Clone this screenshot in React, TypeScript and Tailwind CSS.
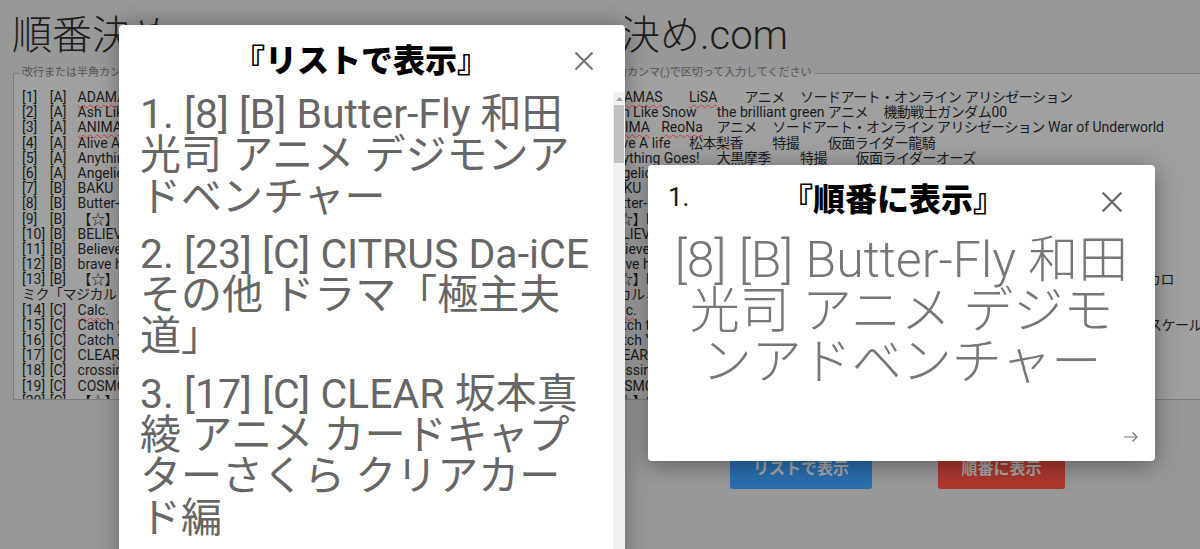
import React from "react";

const RAW: string[] = [
  "[1]\t[A]\t~ADAMAS~\t~LiSA~\tアニメ\tソードアート・オンライン アリシゼーション",
  "[2]\t[A]\tAsh Like Snow\tthe brilliant green\tアニメ\t機動戦士ガンダム00",
  "[3]\t[A]\t~ANIMA~\t~ReoNa~\tアニメ\tソードアート・オンライン アリシゼーション War of Underworld",
  "[4]\t[A]\tAlive A life\t松本梨香\t特撮\t仮面ライダー龍騎",
  "[5]\t[A]\tAnything Goes!\t大黒摩季\t特撮\t仮面ライダーオーズ",
  "[6]\t[A]\tAngelic Angel\tμ's\tアニメ\tラブライブ!",
  "[7]\t[B]\tBAKU\tいきものがかり\tアニメ\tNARUTO-ナルト- 疾風伝",
  "[8]\t[B]\tButter-Fly\t和田光司\tアニメ\tデジモンアドベンチャー",
  "[9]\t[B]\t【☆】Blue Bird\tいきものがかり\tアニメ\tNARUTO-ナルト- 疾風伝",
  "[10]\t[B]\tBELIEVE\t玉置成実\tアニメ\t機動戦士ガンダムSEED",
  "[11]\t[B]\tBelieve\tFolder5\tアニメ\tONE PIECE",
  "[12]\t[B]\tbrave heart\t宮崎歩\tアニメ\tデジモンアドベンチャー",
  "[13]\t[B]\t【☆】Blue Star\tじーざす(ワンダフル☆オポチュニティ!) feat.初音ミク\t\t\t\tボカロ",
  "ミク「マジカルミライ2019」テーマソング",
  "[14]\t[C]\t~Calc.~\tジミーサムP\tボカロ\t初音ミク",
  "[15]\t[C]\tCatch the Moment\tLiSA\tアニメ\t劇場版 ソードアートオンライン -オーディナル・スケール-",
  "[16]\t[C]\tCatch You Catch Me\tグミ\tアニメ\tカードキャプターさくら",
  "[17]\t[C]\tCLEAR\t坂本真綾\tアニメ\tカードキャプターさくら クリアカード編",
  "[18]\t[C]\tcrossing field\tLiSA\tアニメ\tソードアート・オンライン",
  "[19]\t[C]\tCOSMOS\tRed Velvet\tK-POP\tSAPPHIRE",
  "[20]\t[C]\t【☆】Cagayake!GIRLS\t放課後ティータイム\tアニメ\tけいおん!",
];

const CJK = /[\u2600-\u26ff\u3000-\u30ff\u3400-\u9fff\uff00-\uffef]+/g;

function runs(s: string, base: string): React.ReactNode[] {
  const out: React.ReactNode[] = [];
  let last = 0;
  let m: RegExpExecArray | null;
  CJK.lastIndex = 0;
  let k = 0;
  while ((m = CJK.exec(s))) {
    if (m.index > last) out.push(<React.Fragment key={`${base}-t${k++}`}>{s.slice(last, m.index)}</React.Fragment>);
    out.push(
      <span key={`${base}-c${k++}`} className="tracking-[-0.5px]">
        {m[0]}
      </span>
    );
    last = m.index + m[0].length;
  }
  if (last < s.length) out.push(<React.Fragment key={`${base}-t${k++}`}>{s.slice(last)}</React.Fragment>);
  return out;
}

function TextLine({ text }: { text: string }) {
  const parts = text.split("~");
  return (
    <div className="h-[15.2px]">
      {parts.map((p, i) =>
        i % 2 === 1 ? (
          <span
            key={i}
            className="underline decoration-wavy decoration-[#d23b3b] decoration-[1px] underline-offset-[2px]"
          >
            {p}
          </span>
        ) : (
          <React.Fragment key={i}>{runs(p, String(i))}</React.Fragment>
        )
      )}
    </div>
  );
}

function Page() {
  return (
    <div className="h-[549px] w-[1100px] bg-[#989898] pt-[16px] font-[Roboto,'Noto_Sans_CJK_JP',sans-serif]">
      <h1 className="pl-[12px] text-[40px] font-light leading-[40px] text-[#1d1d1d]">
        順番決め.com
      </h1>
      <fieldset className="mx-[13px] mt-[10px] border border-[#7e7e7e] bg-[#a0a0a0] pl-[8px] pt-[10px]">
        <legend className="-ml-[2px] px-[2px] text-[11px] leading-[14px] text-[#555555]">
          改行または半角カンマ(,)で区切って入力してください
        </legend>
        <div className="h-[309px] overflow-hidden whitespace-pre text-[14px] leading-[15.2px] text-[#1b1b1b] [tab-size:8]">
          {RAW.map((t, i) => (
            <TextLine key={i} text={t} />
          ))}
        </div>
      </fieldset>
      <div className="mt-[48px] flex gap-[66px] pl-[202px]">
        <div className="flex h-[41px] w-[142px] items-center justify-center rounded-[3px] bg-[#2b6fae] text-[16px] font-bold text-[#a9a9a9]">
          リストで表示
        </div>
        <div className="flex h-[41px] w-[127px] items-center justify-center rounded-[3px] bg-[#ad382d] text-[16px] font-bold text-[#a9a9a9]">
          順番に表示
        </div>
      </div>
    </div>
  );
}

function CloseIcon({ className }: { className: string }) {
  return (
    <svg className={className} viewBox="0 0 20 20" fill="none">
      <path d="M1.5 1.5L18.5 18.5M18.5 1.5L1.5 18.5" stroke="#6f6f6f" strokeWidth="2" />
    </svg>
  );
}

const ITEMS = [
  "1. [8] [B] Butter-Fly 和田光司 アニメ デジモンアドベンチャー",
  "2. [23] [C] CITRUS Da-iCE その他 ドラマ「極主夫道」",
  "3. [17] [C] CLEAR 坂本真綾 アニメ カードキャプターさくら クリアカード編",
  "4. [5] [A] Anything Goes! 大黒摩季 特撮 仮面ライダーオーズ",
];

export default function App() {
  return (
    <div className="relative flex h-[549px] w-[1200px] overflow-hidden bg-[#989898]">
      <div className="h-[549px] w-[625px] shrink-0 overflow-hidden">
        <Page />
      </div>
      <div className="h-[549px] flex-1 overflow-hidden">
        <div className="-ml-[97px]">
          <Page />
        </div>
      </div>

      {/* List modal */}
      <div className="absolute left-[119px] top-[25px] flex h-[540px] w-[506px] flex-col rounded-t-[4px] bg-white shadow-[0_0_22px_rgba(0,0,0,0.35)] font-[Roboto,'Noto_Sans_CJK_JP',sans-serif]">
        <div className="relative flex h-[67px] shrink-0 items-center pr-[22px] pt-[4px]">
          <h2 className="flex-1 text-center text-[32px] font-black leading-none text-black">
            『リストで表示』
          </h2>
          <CloseIcon className="absolute right-[31px] top-[26px] h-[20px] w-[20px]" />
        </div>
        <div className="flex min-h-0 flex-1">
          <div className="flex-1 overflow-hidden pl-[21px] pr-[15px] pt-[2px] text-[41px] leading-[41.3px] text-[#666666]">
            {ITEMS.map((t, i) => (
              <div key={i} className="mb-[16px]">
                {t}
              </div>
            ))}
          </div>
          <div className="flex w-[12px] flex-col items-center bg-[#f1f1f1]">
            <svg className="mt-[5px] h-[4px] w-[7px]" viewBox="0 0 7 4">
              <path d="M3.5 0L7 4H0Z" fill="#a3a3a3" />
            </svg>
            <div className="mt-[4px] h-[58px] w-[10px] bg-[#c1c1c1]" />
          </div>
        </div>
      </div>

      {/* Sequential modal */}
      <div className="absolute left-[648px] top-[165px] flex h-[296px] w-[507px] flex-col rounded-[4px] bg-white shadow-[0_4px_24px_rgba(0,0,0,0.4)] font-[Roboto,'Noto_Sans_CJK_JP',sans-serif]">
        <div className="relative flex h-[70px] shrink-0 items-center pr-[17px]">
          <span className="absolute left-[20px] top-[17px] text-[26px] leading-[30px] text-[#1a1a1a]">
            1.
          </span>
          <h2 className="flex-1 text-center text-[32px] font-black leading-none text-black">
            『順番に表示』
          </h2>
          <CloseIcon className="absolute right-[32px] top-[26px] h-[22px] w-[22px]" />
        </div>
        <div className="px-[21px] text-center text-[50px] font-light leading-[51px] text-[#777777]">
          [8] [B] Butter-Fly 和田光司 アニメ デジモンアドベンチャー
        </div>
        <div className="mt-auto flex justify-end pb-[19px] pr-[17px]">
          <svg className="h-[10px] w-[14px]" viewBox="0 0 14 10" fill="none">
            <path d="M0 5H13M8.5 0.5L13 5L8.5 9.5" stroke="#777777" strokeWidth="1.2" />
          </svg>
        </div>
      </div>
    </div>
  );
}
